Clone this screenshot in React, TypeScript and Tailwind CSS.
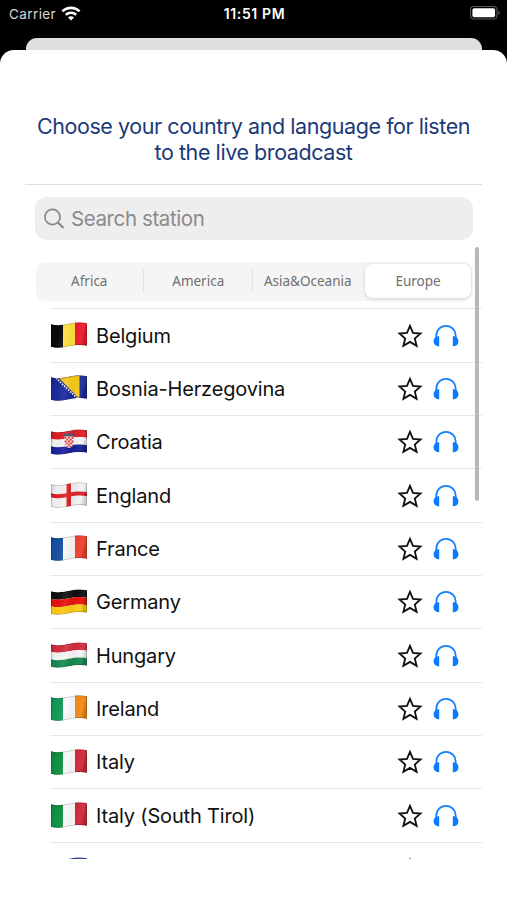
import { useId } from "react";
import type { ReactNode } from "react";

const regions = [
    { name: "Africa", active: false, divider: true },
    { name: "America", active: false, divider: true },
    { name: "Asia&Oceania", active: false, divider: false },
    { name: "Europe", active: true, divider: false },
];

// A horizontal strip that follows the wave of the cloth
function wave(top: number, bottom: number) {
    return `M0 ${top + 2.2} C5 ${top + 3.8} 12 ${top + 3.2} 18 ${top + 1.8} C24 ${top + 0.4} 31 ${top} 36 ${top + 1.2} V${bottom + 1.2} C31 ${bottom} 24 ${bottom + 0.4} 18 ${bottom + 1.8} C12 ${bottom + 3.2} 5 ${bottom + 3.8} 0 ${bottom + 2.2} Z`;
}

function Flag({ children }: { children: ReactNode }) {
    const id = useId();
    return (
        <svg width="36" height="26" viewBox="0 0 36 26" className="mb-px block shrink-0">
            <defs>
                <clipPath id={`${id}c`}>
                    <path d={wave(0, 22.5)} />
                </clipPath>
                <linearGradient id={`${id}g`} x1="0" x2="1" y1="0" y2="0.15">
                    <stop offset="0" stopColor="#000" stopOpacity="0.15" />
                    <stop offset="0.2" stopColor="#000" stopOpacity="0.02" />
                    <stop offset="0.45" stopColor="#fff" stopOpacity="0.08" />
                    <stop offset="0.68" stopColor="#000" stopOpacity="0.04" />
                    <stop offset="0.88" stopColor="#fff" stopOpacity="0.04" />
                    <stop offset="1" stopColor="#000" stopOpacity="0.15" />
                </linearGradient>
            </defs>
            <g clipPath={`url(#${id}c)`}>
                {children}
                <rect width="36" height="26" fill={`url(#${id}g)`} />
                <path d={wave(0, 22.5)} fill="none" stroke="#000" strokeOpacity="0.25" strokeWidth="1.3" />
            </g>
        </svg>
    );
}

function Vertical({ colors }: { colors: string[] }) {
    return (
        <Flag>
            {colors.map((c, i) => (
                <rect key={i} x={i * 12} width="12" height="26" fill={c} />
            ))}
        </Flag>
    );
}

function Horizontal({ colors, children }: { colors: string[]; children?: ReactNode }) {
    return (
        <Flag>
            {colors.map((c, i) => (
                <path key={i} d={wave(i * 7.5, (i + 1) * 7.5)} fill={c} />
            ))}
            {children}
        </Flag>
    );
}

function Bosnia() {
    return (
        <Flag>
            <rect width="36" height="26" fill="#1c2a9c" />
            <path d="M7 2 L28.5 0 V24 Z" fill="#f7cb1c" />
            <path d="M5 3 L27 24" stroke="#fff" strokeWidth="1.7" strokeDasharray="1.5 1.3" />
        </Flag>
    );
}

function Croatia() {
    return (
        <Horizontal colors={["#df2027", "#f4f4f4", "#17239a"]}>
            <path d="M12.5 7.5 L13 4.5 L15.5 5.5 L18 4 L20.5 5 L23 4 L23.5 7.5 Z" fill="#3f526d" />
            <path d="M13.5 7.5 H22.5 V14 C22.5 17 20 18.5 18 19 C16 18.5 13.5 17.5 13.5 15 Z" fill="#f4f4f4" />
            <path d="M14.5 8 V16 M18 8 V19 M21.5 8 V16" stroke="#e02b31" strokeWidth="1.8" strokeDasharray="1.8 1.8" />
            <path d="M16.2 9.8 V18 M19.8 9.8 V18" stroke="#e02b31" strokeWidth="1.8" strokeDasharray="1.8 1.8" />
        </Horizontal>
    );
}

function England() {
    return (
        <Flag>
            <rect width="36" height="26" fill="#f3f3f3" />
            <path d={wave(9, 13)} fill="#df2027" />
            <rect x="15.5" width="4.5" height="26" fill="#df2027" />
        </Flag>
    );
}

const countries = [
    { name: "Belgium", flag: <Vertical colors={["#0a0a0a", "#fde140", "#ed1b2d"]} /> },
    { name: "Bosnia-Herzegovina", flag: <Bosnia /> },
    { name: "Croatia", flag: <Croatia /> },
    { name: "England", flag: <England /> },
    { name: "France", flag: <Vertical colors={["#1652a4", "#f8f8f8", "#f0402f"]} /> },
    { name: "Germany", flag: <Horizontal colors={["#101010", "#e8120c", "#fccb10"]} /> },
    { name: "Hungary", flag: <Horizontal colors={["#d32d40", "#f6f6f6", "#168a50"]} /> },
    { name: "Ireland", flag: <Vertical colors={["#149b5b", "#fbfbfb", "#f28a18"]} /> },
    { name: "Italy", flag: <Vertical colors={["#109346", "#fbfbfb", "#d02a38"]} /> },
    { name: "Italy (South Tirol)", flag: <Vertical colors={["#109346", "#fbfbfb", "#d02a38"]} /> },
    { name: "", flag: <Horizontal colors={["#2947a5", "#2947a5", "#2947a5"]} /> },
];

function Star() {
    return (
        <svg width="26" height="26" viewBox="0 0 26 26" fill="none" stroke="#111" strokeWidth="1.8" className="shrink-0">
            <path d="M13 2.8 L16 9.9 L23.5 10.5 L17.8 15.5 L19.6 22.8 L13 18.9 L6.4 22.8 L8.2 15.5 L2.5 10.5 L10 9.9 Z" />
        </svg>
    );
}

function Headphones() {
    return (
        <svg width="26" height="24" viewBox="0 0 26 24" fill="#0a7aff" className="shrink-0">
            <path d="M3.3 14 V11.5 A9.7 9.7 0 0 1 22.7 11.5 V14" fill="none" stroke="#1681ff" strokeWidth="1.8" />
            <path d="M6.2 12.3 V22.3 C3 22.3 .6 20.5 .6 17.3 C.6 14.2 3 12.3 6.2 12.3 Z" />
            <path d="M19.8 12.3 V22.3 C23 22.3 25.4 20.5 25.4 17.3 C25.4 14.2 23 12.3 19.8 12.3 Z" />
        </svg>
    );
}

function StatusBar() {
    return (
        <div className="grid h-[38px] grid-cols-3 items-start pl-2 pr-1.5 text-[13.5px] leading-[28px] text-white">
            <div className="flex items-center gap-[5px] pl-px">
                <span className="tracking-[0.4px] text-[#d8d8d8]">Carrier</span>
                <svg width="20" height="15" viewBox="0 0 20 15" fill="none" stroke="#fff" strokeWidth="2.6" className="-mt-[2px]">
                    <path d="M1.4 5.4 C6.2 .7 13.8 .7 18.6 5.4" />
                    <path d="M4.8 8.8 C7.7 6.1 12.3 6.1 15.2 8.8" />
                    <path d="M10 14.5 L7 11.5 C8.7 9.9 11.3 9.9 13 11.5 Z" fill="#fff" stroke="none" />
                </svg>
            </div>
            <span className="whitespace-nowrap text-center text-[14px] font-semibold tracking-[0.65px]">11:51 PM</span>
            <svg width="32" height="16" viewBox="0 0 32 16" className="mt-[5px] justify-self-end">
                <rect x="1.5" y="1.5" width="26.5" height="12.5" rx="3.5" fill="none" stroke="#555" strokeWidth="1.2" />
                <rect x="3.4" y="3.3" width="22.7" height="9" rx="1.8" fill="#fff" />
                <path d="M29.3 5.5 C31.5 6.5 31.5 9 29.3 10 Z" fill="#555" />
            </svg>
        </div>
    );
}

export default function App() {
    return (
        <div className="flex h-[900px] w-[507px] flex-col overflow-hidden bg-black font-['Inter',sans-serif]">
            <StatusBar />
            <div className="mx-[25.5px] h-3 shrink-0 rounded-t-[11px] bg-[#dfdfdf]" />
            <main className="flex min-h-0 flex-1 flex-col rounded-t-[14px] bg-white px-[25px] pt-[63px]">
                <h1 className="whitespace-nowrap text-center text-[21.5px] leading-[26px] tracking-[-0.43px] text-[#1b3a77]">
                    Choose your country and language for listen
                    <br />
                    to the live broadcast
                </h1>

                <section className="relative mt-[19px] h-[675px] overflow-hidden border-t border-[#dedede]">
                    <div className="ml-[10px] mr-[9px] mt-3 flex h-[43px] items-center gap-[6px] rounded-[12px] bg-[#eeeeee] px-2 text-[#8a8a8c]">
                        <svg width="22" height="22" viewBox="0 0 22 22" fill="none" stroke="currentColor" strokeWidth="1.7">
                            <circle cx="9.5" cy="9" r="7.6" />
                            <path d="M15 14.5 L20.5 20" strokeWidth="2.2" />
                        </svg>
                        <span className="pt-[2px] text-[20.5px] tracking-[-0.4px]">Search station</span>
                    </div>

                    <nav className="ml-[11px] mr-[10px] mt-[21.5px] grid h-[39px] grid-cols-4 items-center rounded-[9px] bg-[#f5f5f5] font-['Noto_Sans',sans-serif] text-[13.5px] text-[#707070]">
                        {regions.map((r) => (
                            <div
                                key={r.name}
                                className={
                                    r.active
                                        ? "ml-[2px] mr-px flex h-[34px] items-center justify-center rounded-[8px] bg-white shadow-[0_1px_4px_rgba(0,0,0,0.14)]"
                                        : "flex h-[26px] items-center justify-center pr-[1.5px]"
                                }
                            >
                                <span className="flex-1 text-center">{r.name}</span>
                                {r.divider && <span className="h-6 w-px bg-[#e2e2e2]" />}
                            </div>
                        ))}
                    </nav>

                    <ul className="ml-[25px] mt-[7.9px] border-t border-[#e6e6e6]">
                        {countries.map((c, i) => (
                            <li key={i} className="flex h-[53.35px] items-center border-b border-[#e6e6e6] pl-px text-[20px] text-[#111] last:pt-[2px]">
                                {c.flag}
                                <span className="ml-[9px] flex-1 whitespace-nowrap tracking-[-0.17px]">{c.name}</span>
                                <div className="mr-[23px] flex items-center gap-[10px]">
                                    <Star />
                                    <Headphones />
                                </div>
                            </li>
                        ))}
                    </ul>

                    {/* Scroll indicator */}
                    <div className="absolute right-[3px] top-[62px] h-[254px] w-1 rounded-full bg-[#b7b7b7]" />
                </section>
            </main>
        </div>
    );
}
